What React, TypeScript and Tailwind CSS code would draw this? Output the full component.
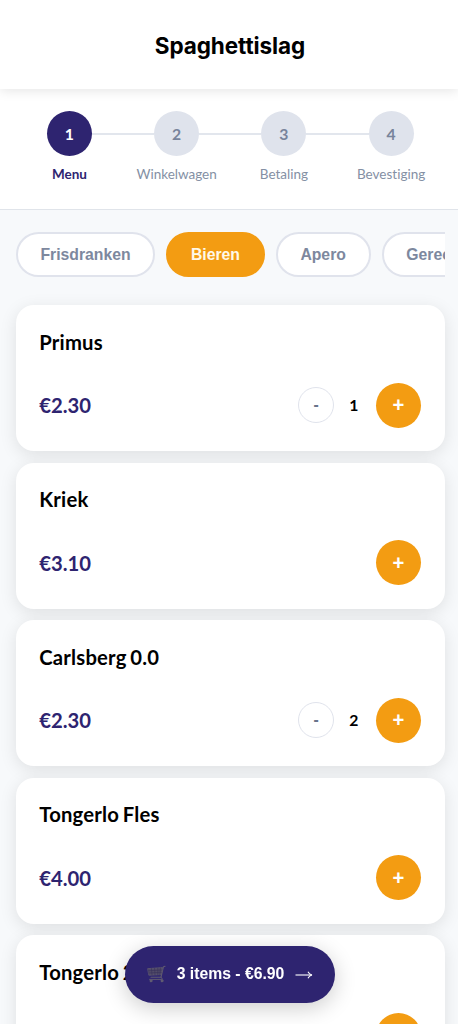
import { useState } from 'react';

interface Product {
  id: number;
  name: string;
  price: number;
}

const steps = ['Menu', 'Winkelwagen', 'Betaling', 'Bevestiging'];

const categories = ['Frisdranken', 'Bieren', 'Apero', 'Gerechten'];

const products: Product[] = [
  { id: 1, name: 'Primus', price: 2.3 },
  { id: 2, name: 'Kriek', price: 3.1 },
  { id: 3, name: 'Carlsberg 0.0', price: 2.3 },
  { id: 4, name: 'Tongerlo Fles', price: 4 },
  { id: 5, name: 'Tongerlo 2.0', price: 4 },
];

function CartIcon() {
  return (
    <svg width="19" height="18" viewBox="0 0 19 18" fill="none" stroke="#605b70" strokeLinecap="round">
      <path d="M18 1.2 16.4 1.8 14 12.2 H4" strokeWidth="1.1" />
      <path d="M1 3.6 15.5 2.6 14 9.6 2.2 10.2Z" fill="#514b68" strokeWidth="0.8" />
      <path d="M1.5 5.8 15 5M1.8 8 14.4 7.3M4.4 3.5 5 10M7.6 3.2 8 9.9M10.8 3 10.8 9.8M13.4 2.9 12.8 9.6" stroke="#37315a" strokeWidth="0.6" />
      <path d="M14 12.2 15.6 14.4H2.6" strokeWidth="1" />
      <circle cx="4" cy="15.9" r="1" fill="#77737f" />
      <circle cx="15" cy="15.9" r="1" fill="#77737f" />
    </svg>
  );
}

function ArrowIcon() {
  return (
    <svg className="mt-[2px]" width="18" height="10" viewBox="0 0 18 10" fill="none" stroke="#fff" strokeWidth="1.1">
      <path d="M0.5 5H16.5" />
      <path d="M13 1.8C13.8 3.5 15 4.6 17 5C15 5.4 13.8 6.5 13 8.2" />
    </svg>
  );
}

export default function App() {
  const [category, setCategory] = useState('Bieren');
  const [cart, setCart] = useState<Record<number, number>>({ 1: 1, 3: 2 });

  const change = (id: number, delta: number) => {
    setCart(prev => ({ ...prev, [id]: Math.max(0, (prev[id] ?? 0) + delta) }));
  };

  const count = products.reduce((sum, p) => sum + (cart[p.id] ?? 0), 0);
  const total = products.reduce((sum, p) => sum + (cart[p.id] ?? 0) * p.price, 0);

  return (
    <main className="h-screen overflow-hidden bg-[#f7f9fb] font-['Lato',sans-serif] text-black [font-variant-ligatures:none]">
      <header className="relative z-10 flex h-[89px] items-center justify-center bg-white pt-[3px] pl-[2px] shadow-[0_2px_11px_rgba(0,0,0,0.1)]">
        <h1 className="font-['Inter',sans-serif] text-[22.5px] font-bold tracking-[-0.1px]">Spaghettislag</h1>
      </header>

      {/* Order progress */}
      <nav className="flex h-[120.5px] border-b border-[#e0e4ea] bg-white pt-[22px] pr-[13.25px] pl-[15.75px]">
        {steps.map((step, index) => (
          <div key={step} className="flex flex-1 flex-col items-center">
            <div className="flex w-full items-center">
              <div className={`h-[2px] flex-1 ${index > 0 ? 'bg-[#e2e6ed]' : ''}`} />
              <div
                className={`flex size-[45px] items-center justify-center rounded-full text-[15.75px] font-bold ${
                  index === 0 ? 'bg-[#2e2470] text-white' : 'bg-[#dfe3ec] text-[#78849b]'
                }`}
              >
                {index + 1}
              </div>
              <div className={`h-[2px] flex-1 ${index < steps.length - 1 ? 'bg-[#e2e6ed]' : ''}`} />
            </div>
            <span
              className={`mt-2 text-[13.5px] leading-5 ${
                index === 0 ? 'font-bold text-[#2e2470]' : 'text-[#8490a4]'
              }`}
            >
              {step}
            </span>
          </div>
        ))}
      </nav>

      <div className="pt-[22.5px] pr-[13.5px] pl-[15.75px]">
        <div className="flex gap-[11px] overflow-hidden">
          {categories.map(name => (
            <button
              key={name}
              onClick={() => setCategory(name)}
              className={`h-[44.5px] shrink-0 rounded-full border-2 px-[22.7px] pt-px font-['Liberation_Sans',sans-serif] text-[15.75px] font-bold ${
                name === category
                  ? 'border-[#f39c12] bg-[#f39c12] text-[#fff8e8]'
                  : 'border-[#e0e3ec] bg-white text-[#7d889e]'
              }`}
            >
              {name}
            </button>
          ))}
        </div>

        {/* Product cards */}
        <div className="mt-[28.5px] flex flex-col gap-[11.25px]">
          {products.map(product => {
            const quantity = cart[product.id] ?? 0;
            return (
              <div
                key={product.id}
                className="flex h-[146.25px] shrink-0 flex-col justify-between rounded-[18px] bg-white px-[23.5px] pt-[22.5px] pb-[23.5px] shadow-[0_4px_17px_rgba(0,0,0,0.1)]"
              >
                <h2 className="text-[20.25px] leading-[29px] font-bold tracking-[0.2px] [word-spacing:-1.5px]">
                  {product.name}
                </h2>
                <div className="flex items-center justify-between">
                  <span className="text-[20.25px] font-bold text-[#2e2470]">
                    €{product.price.toFixed(2)}
                  </span>
                  <div className="flex items-center">
                    {quantity > 0 && (
                      <>
                        <button
                          onClick={() => change(product.id, -1)}
                          className="size-9 rounded-full border border-[#e0e3ec] font-['Liberation_Sans',sans-serif] text-[15.75px] font-bold text-[#68748b]"
                        >
                          -
                        </button>
                        <span className="w-[42px] pr-[2.5px] text-center text-[15.75px] font-bold">{quantity}</span>
                      </>
                    )}
                    <button
                      onClick={() => change(product.id, 1)}
                      className="size-[45px] rounded-full bg-[#f39c12] font-['Liberation_Sans',sans-serif] text-[20.25px] font-bold text-white"
                    >
                      +
                    </button>
                  </div>
                </div>
              </div>
            );
          })}
        </div>
      </div>

      {/* Floating cart button */}
      <button className="fixed bottom-[21px] left-[125px] z-20 flex h-[57.5px] w-[210px] items-center justify-center gap-[11px] rounded-full bg-[#2e2470] font-['Liberation_Sans',sans-serif] text-[15.75px] font-bold whitespace-nowrap text-white shadow-[0_5px_22px_rgba(0,0,0,0.2)]">
        <CartIcon />
        <span>
          {count} items - €{total.toFixed(2)}
        </span>
        <ArrowIcon />
      </button>
    </main>
  );
}
